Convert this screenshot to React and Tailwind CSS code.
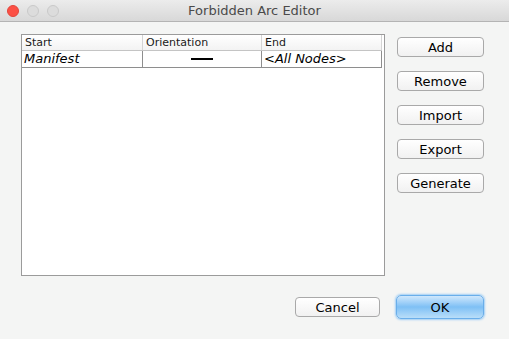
import React from 'react'

const font = { fontFamily: '"DejaVu Sans", "Liberation Sans", sans-serif' }

function SideButton({ children }) {
  return (
    <button
      type="button"
      className="w-[87px] h-[20px] rounded-[4px] border border-[#a9a9a9] bg-gradient-to-b from-white to-[#f1f1f1] text-[13px] leading-none text-black flex items-center justify-center"
    >
      {children}
    </button>
  )
}

export default function App() {
  return (
    <div className="w-[509px] h-[339px] bg-[#f4f5f4] flex flex-col overflow-hidden" style={font}>
      {/* Title bar */}
      <div className="relative h-[22px] shrink-0 bg-gradient-to-b from-[#ececec] to-[#d8d8d8] border-b border-[#b4b4b4] flex items-center justify-center">
        <div className="absolute left-[7px] top-[5px] flex gap-[8px]">
          <span className="w-[12px] h-[12px] rounded-full bg-[#fc5045] border border-[#e2463c]" />
          <span className="w-[12px] h-[12px] rounded-full bg-[#dcdcdc] border border-[#c9c9c9]" />
          <span className="w-[12px] h-[12px] rounded-full bg-[#dcdcdc] border border-[#c9c9c9]" />
        </div>
        <span className="text-[13px] text-[#4a4a4a]">Forbidden Arc Editor</span>
      </div>

      {/* Content */}
      <div className="flex pl-[21px] pt-[12px]">
        <div className="w-[364px] h-[242px] border border-[#9b9b9b] bg-white pr-[2px]">
          <div className="flex h-[16px] bg-gradient-to-b from-white to-[#f3f3f3] border-b border-[#c4c4c4] text-[11px] text-[#1a1a1a] leading-[15px]">
            <div className="w-[121px] pl-[3px] border-r border-[#d4d4d4]">Start</div>
            <div className="w-[119px] pl-[3px] border-r border-[#d4d4d4]">Orientation</div>
            <div className="w-[120px] pl-[3px] border-r border-[#d4d4d4]">End</div>
          </div>
          <div className="flex h-[17px] border-b border-[#8e8e8e] text-[13px] italic text-black leading-[16px]">
            <div className="w-[121px] pl-[2px] border-r border-[#8e8e8e]">Manifest</div>
            <div className="w-[119px] border-r border-[#8e8e8e] flex items-center justify-center">
              <span className="block w-[22px] h-[2px] bg-black" />
            </div>
            <div className="w-[120px] pl-[2px] border-r border-[#8e8e8e]">&lt;All Nodes&gt;</div>
          </div>
        </div>

        <div className="ml-[12px] pt-[3px] flex flex-col gap-[14px]">
          <SideButton>Add</SideButton>
          <SideButton>Remove</SideButton>
          <SideButton>Import</SideButton>
          <SideButton>Export</SideButton>
          <SideButton>Generate</SideButton>
        </div>
      </div>

      {/* Bottom buttons */}
      <div className="flex justify-end items-center gap-[16px] pr-[25px] mt-[19px]">
        <button
          type="button"
          className="w-[85px] h-[20px] rounded-[4px] border border-[#a9a9a9] bg-gradient-to-b from-white to-[#f1f1f1] text-[13px] leading-none text-black flex items-center justify-center"
        >
          Cancel
        </button>
        <button
          type="button"
          className="w-[88px] h-[24px] rounded-[5px] border border-[#6aaeea] bg-gradient-to-b from-[#cfe7fc] via-[#7ec0f5] to-[#b9def9] shadow-[0_0_2px_1px_#9fcdf5] text-[13px] leading-none text-black flex items-center justify-center"
        >
          OK
        </button>
      </div>
    </div>
  )
}
